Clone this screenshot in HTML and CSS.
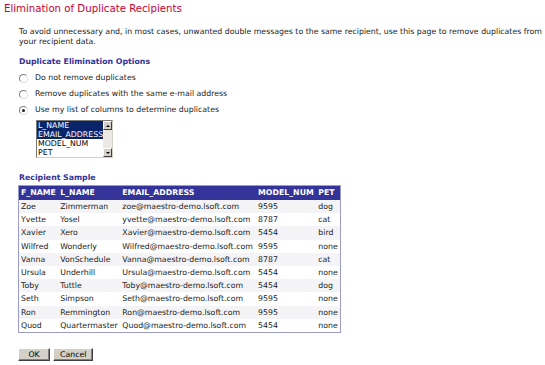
FILE: index.html
```html
<!DOCTYPE html>
<html lang="en">
<head>
  <meta charset="UTF-8">
  <title>Elimination of Duplicate Recipients</title>
  <link rel="stylesheet" href="styles.css">
</head>
<body>
  <h1>Elimination of Duplicate Recipients</h1>

  <div class="content">
    <p class="intro">To avoid unnecessary and, in most cases, unwanted double messages to the same recipient, use this page to remove duplicates from your recipient data.</p>

    <h2>Duplicate Elimination Options</h2>
    <div class="options">
      <label class="option"><input type="radio" name="dup"> Do not remove duplicates</label>
      <label class="option"><input type="radio" name="dup"> Remove duplicates with the same e-mail address</label>
      <label class="option"><input type="radio" name="dup" checked> Use my list of columns to determine duplicates</label>
    </div>

    <div class="listbox">
      <ul class="list-items">
        <li class="selected">L_NAME</li>
        <li class="selected">EMAIL_ADDRESS</li>
        <li>MODEL_NUM</li>
        <li>PET</li>
      </ul>
      <div class="scrollbar">
        <span class="arrow up"></span>
        <span class="track"></span>
        <span class="arrow down"></span>
      </div>
    </div>

    <h2 class="sample-title">Recipient Sample</h2>
    <table class="sample">
      <thead>
        <tr><th>F_NAME</th><th>L_NAME</th><th>EMAIL_ADDRESS</th><th>MODEL_NUM</th><th>PET</th></tr>
      </thead>
      <tbody>
        <tr><td>Zoe</td><td>Zimmerman</td><td>zoe@maestro-demo.lsoft.com</td><td>9595</td><td>dog</td></tr>
        <tr><td>Yvette</td><td>Yosel</td><td>yvette@maestro-demo.lsoft.com</td><td>8787</td><td>cat</td></tr>
        <tr><td>Xavier</td><td>Xero</td><td>Xavier@maestro-demo.lsoft.com</td><td>5454</td><td>bird</td></tr>
        <tr><td>Wilfred</td><td>Wonderly</td><td>Wilfred@maestro-demo.lsoft.com</td><td>9595</td><td>none</td></tr>
        <tr><td>Vanna</td><td>VonSchedule</td><td>Vanna@maestro-demo.lsoft.com</td><td>8787</td><td>cat</td></tr>
        <tr><td>Ursula</td><td>Underhill</td><td>Ursula@maestro-demo.lsoft.com</td><td>5454</td><td>none</td></tr>
        <tr><td>Toby</td><td>Tuttle</td><td>Toby@maestro-demo.lsoft.com</td><td>5454</td><td>dog</td></tr>
        <tr><td>Seth</td><td>Simpson</td><td>Seth@maestro-demo.lsoft.com</td><td>9595</td><td>none</td></tr>
        <tr><td>Ron</td><td>Remmington</td><td>Ron@maestro-demo.lsoft.com</td><td>9595</td><td>none</td></tr>
        <tr><td>Quod</td><td>Quartermaster</td><td>Quod@maestro-demo.lsoft.com</td><td>5454</td><td>none</td></tr>
      </tbody>
    </table>

    <div class="buttons">
      <button type="button" class="btn">OK</button>
      <button type="button" class="btn">Cancel</button>
    </div>
  </div>
</body>
</html>
```
FILE: styles.css
```css
body {
  margin: 0;
  padding: 0;
  background: #fff;
  color: #222;
  font-family: 'DejaVu Sans', Verdana, sans-serif;
  font-size: 7.8px;
}

h1 {
  margin: 0;
  padding: 3px 0 0 4px;
  font-size: 10.2px;
  font-weight: normal;
  color: #cc0033;
  line-height: 12px;
}

.content {
  padding: 0 0 0 19px;
}

.intro {
  margin: 12px 3px 0 0;
  line-height: 10px;
}

h2 {
  margin: 10px 0 0;
  font-size: 7.8px;
  color: #333399;
  line-height: 10px;
}

.options {
  margin-top: 6px;
  display: flex;
  flex-direction: column;
  gap: 6px;
}

.option {
  display: flex;
  align-items: center;
  gap: 7px;
  line-height: 10px;
}

.option input {
  appearance: none;
  margin: 0;
  width: 9px;
  height: 9px;
  border-radius: 50%;
  border: 1px solid #808080;
  border-right-color: #e0e0e0;
  border-bottom-color: #e0e0e0;
  background: #fff;
  display: grid;
  place-items: center;
}

.option input:checked::after {
  content: "";
  width: 3px;
  height: 3px;
  border-radius: 50%;
  background: #222;
}

.listbox {
  margin: 5px 0 0 17px;
  width: 75px;
  height: 36px;
  border: 1px solid #7a7a7a;
  border-right-color: #d4d0c8;
  border-bottom-color: #d4d0c8;
  display: flex;
}

.list-items {
  list-style: none;
  margin: 0;
  padding: 0;
  flex: 1;
}

.list-items li {
  height: 9px;
  line-height: 9px;
  padding-left: 1px;
  color: #000;
}

.list-items li.selected {
  background: #0a246a;
  color: #fff;
}

.scrollbar {
  width: 9px;
  display: flex;
  flex-direction: column;
  background: #ebe9e3;
}

.track {
  flex: 1;
}

.arrow {
  height: 9px;
  background: #d4d0c8;
  border: 1px solid #fff;
  border-right-color: #404040;
  border-bottom-color: #404040;
  box-sizing: border-box;
  display: grid;
  place-items: center;
}

.arrow::after {
  content: "";
  border-left: 2px solid transparent;
  border-right: 2px solid transparent;
}

.arrow.up::after {
  border-bottom: 2px solid #000;
}

.arrow.down::after {
  border-top: 2px solid #000;
}

.sample-title {
  margin-top: 15px;
}

.sample {
  margin-top: 2px;
  margin-left: -1px;
  width: 323px;
  border-collapse: collapse;
  border: 1px solid #9c9cc8;
}

.sample th {
  background: #333399;
  color: #fff;
  text-align: left;
  padding: 2px 2px 2px 2px;
  line-height: 10px;
  white-space: nowrap;
}

.sample td {
  padding: 2px 2px;
  line-height: 9.2px;
  white-space: nowrap;
}

.sample tbody tr:nth-child(odd) {
  background: #f4f4f6;
}

.buttons {
  margin-top: 15px;
  margin-left: -1px;
  display: flex;
  gap: 3px;
}

.btn {
  font-family: inherit;
  font-size: 7.8px;
  height: 13px;
  padding: 0 6px;
  background: #d4d0c8;
  color: #000;
  border: 1px solid #fff;
  border-right-color: #404040;
  border-bottom-color: #404040;
  box-shadow: inset -1px -1px 0 #808080;
  line-height: 10px;
}

.btn:first-child {
  width: 32px;
}

.btn:last-child {
  width: 40px;
}
```
